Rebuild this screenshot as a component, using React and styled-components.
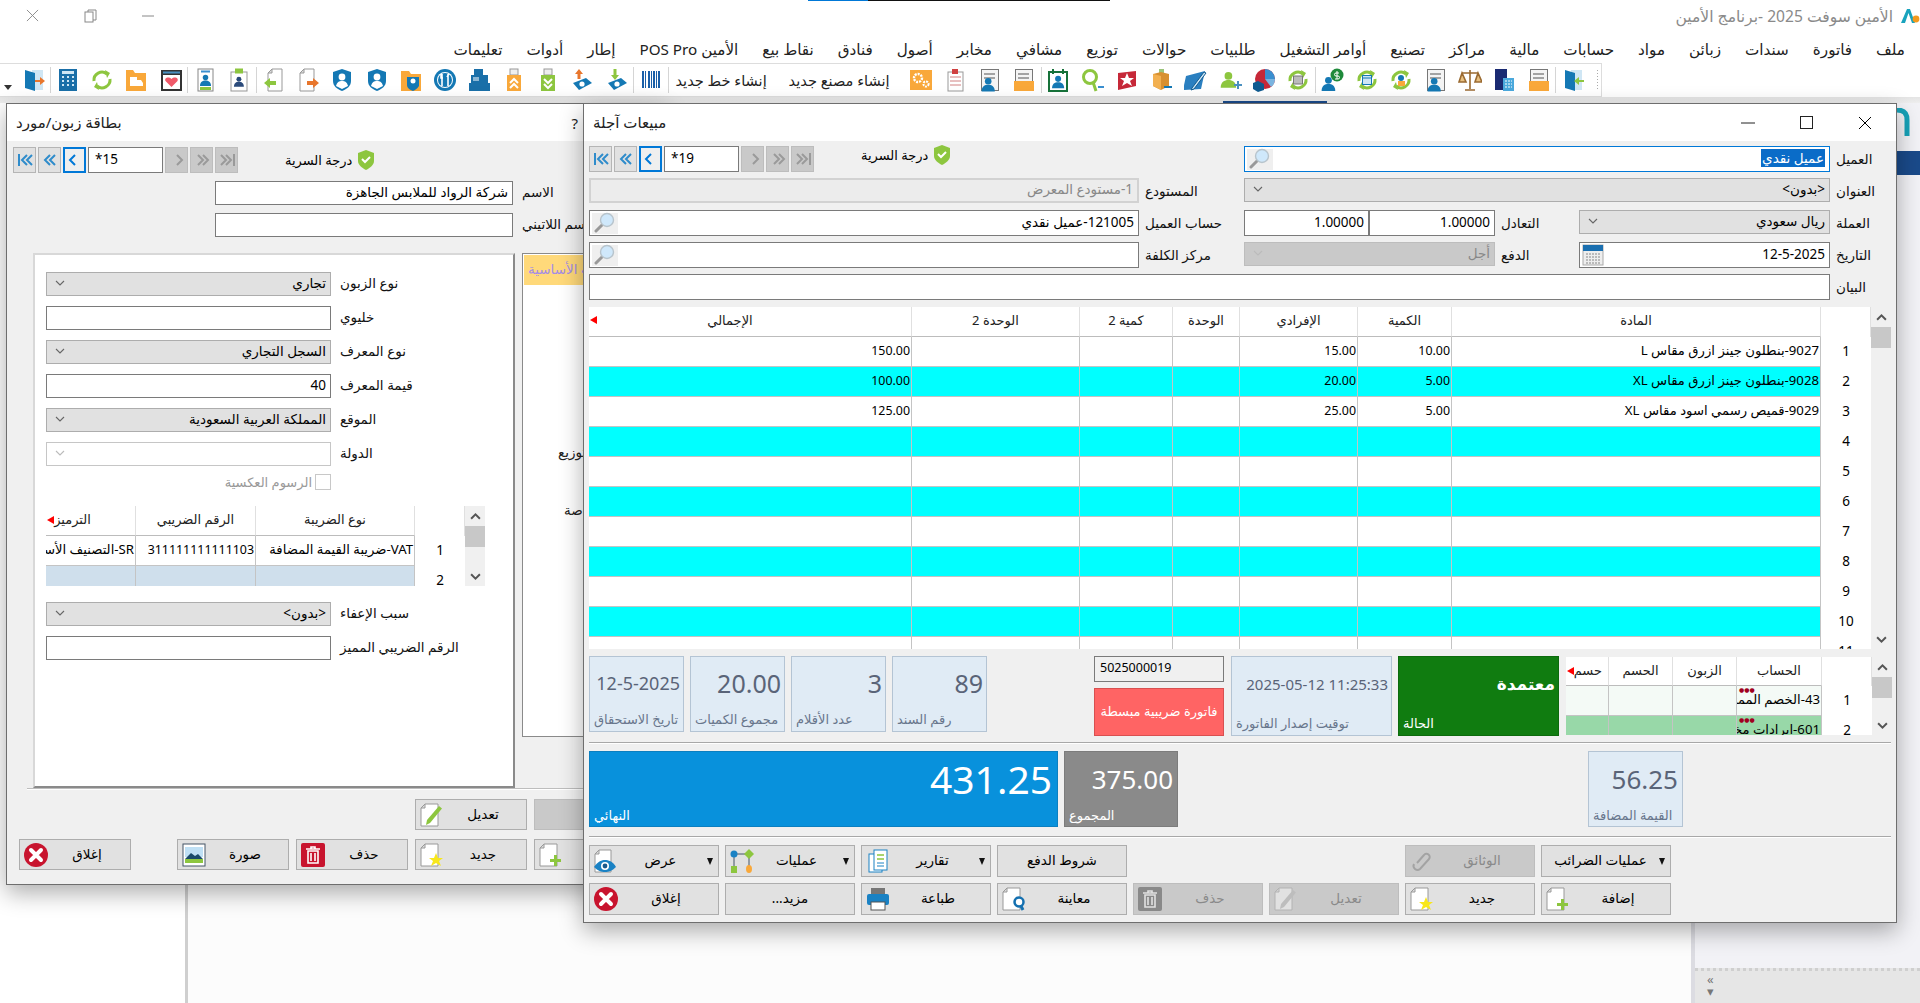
import React from 'react';
import styled, { createGlobalStyle, css } from 'styled-components';

const FONT = '"Noto Sans","DejaVu Sans",sans-serif';
const Global = createGlobalStyle`
  html,body{margin:0;padding:0;background:#fff;overflow:hidden}
  *{box-sizing:border-box}
  body{font-family:${FONT};font-size:13.5px;color:#000}
`;

const Page = styled.div`width:1920px;height:1003px;position:relative;overflow:hidden;display:flex;flex-direction:column;background:#fff;`;
const ProgressLine = styled.div`height:1px;flex:none;display:flex;padding-left:808px;`;
const ProgressSeg = styled.div`height:1px;width:${p => p.$w}px;background:${p => p.$c};`;
const TitleBar = styled.div`height:37px;flex:none;display:flex;align-items:center;justify-content:space-between;padding:0 0 8px 26px;`;
const WinControls = styled.div`display:flex;gap:45px;align-items:center;color:#888;`;
const AppTitle = styled.div`display:flex;align-items:center;gap:7px;color:#8a8a8a;font-size:15.6px;direction:ltr;`;
const AppTitleText = styled.span`direction:rtl;white-space:nowrap;`;
const MenuBar = styled.div`height:25px;flex:none;display:flex;direction:rtl;gap:24px;padding:0 15px 4px 0;align-items:center;font-size:15.2px;color:#222;white-space:nowrap;`;
const MenuItem = styled.span``;
const Toolbar = styled.div`height:34px;width:1602px;flex:none;display:flex;direction:rtl;align-items:center;padding-right:11px;border:1px solid #ddd;border-left:none;position:relative;background:#fff;`;
const Grip = styled.div`position:absolute;right:2px;top:5px;bottom:5px;width:3px;background:radial-gradient(#aaa 0.6px,transparent 0.8px) 0 0/3px 3px;`;
const ToolBtn = styled.div`width:34.3px;height:30px;flex:none;display:flex;align-items:center;justify-content:center;`;
const ToolText = styled.div`width:${p => p.$w}px;flex:none;text-align:center;font-size:14.6px;color:#222;white-space:nowrap;`;
const ToolSep = styled.div`width:1px;height:26px;flex:none;margin:0 -0.5px;background:#d5d5d5;`;
const Caret = styled.div`position:absolute;left:4px;bottom:6px;width:0;height:0;border-left:4px solid transparent;border-right:4px solid transparent;border-top:5px solid #333;`;

const Main = styled.div`flex:1;display:flex;flex-direction:column;min-height:0;`;
const Band = styled.div`height:6px;flex:none;background:linear-gradient(#e4e4e4,#eeeeee);display:flex;align-items:flex-end;padding-left:1223px;`;
const BandTab = styled.div`width:104px;height:2px;background:#1a4a8a;`;
const Columns = styled.div`flex:1;display:flex;min-height:0;`;
const SideStrip = styled.div`width:188px;flex:none;background:#fff;border-right:3px solid #cfcfcf;`;
const Client = styled.div`flex:1;background:#fcfcfc;`;
const RightPanel = styled.div`width:229px;flex:none;background:#f2f2f6;border-left:4px solid #dcdce2;display:flex;flex-direction:column;`;
const PanelLogo = styled.div`padding:5px 0 0 202px;height:48px;flex:none;`;
const PanelBar = styled.div`height:24px;margin-left:202px;background:#1a4a8a;flex:none;`;
const PanelFill = styled.div`flex:1;`;
const PanelFoot = styled.div`height:35px;flex:none;background:#e6e6e6;border-top:3px dotted #cfcfcf;padding:2px 0 0 12px;color:#777;font-size:13px;line-height:12px;`;

const Dialog = styled.div`
  position:absolute;left:${p => p.$x}px;top:103px;width:${p => p.$w}px;height:${p => p.$h}px;
  background:#f0f0f0;border:1px solid #6e6e6e;box-shadow:0 8px 22px rgba(0,0,0,.32);display:flex;flex-direction:column;
  z-index:${p => p.$z};overflow:hidden;
`;
const DlgTitle = styled.div`height:37px;flex:none;background:#fff;display:flex;align-items:center;justify-content:space-between;padding:${p => p.$pad};`;
const DlgName = styled.div`font-size:15px;direction:rtl;white-space:nowrap;color:#222;padding-bottom:2px;`;
const DlgCtl = styled.div`display:flex;gap:45px;align-items:center;`;
const HelpMark = styled.div`font-size:15px;margin-right:${p => p.$mr}px;color:#222;`;

const Nav = styled.div`display:flex;gap:2px;align-items:flex-start;`;
const NavBtn = styled.div`
  width:23px;height:26px;display:flex;align-items:center;justify-content:center;
  border:1px solid ${p => p.$off ? '#bdbdbd' : '#b5b5b5'};background:${p => p.$off ? '#c9c9c9' : '#e1e1e1'};
  color:${p => p.$off ? '#9a9a9a' : '#2f8ccb'};
  ${p => p.$focus && css`border:2px solid #0078d7;background:#efefef;color:#0078d7;`}
`;
const NavInput = styled.div`width:75px;height:26px;background:#fff;border:1px solid #7a7a7a;padding-left:6px;line-height:23px;font-size:13.5px;`;
const Secrecy = styled.div`display:flex;gap:5px;align-items:center;margin:${p => p.$mt}px 0 0 ${p => p.$ml}px;height:22px;direction:ltr;`;
const SecrecyLabel = styled.span`direction:rtl;white-space:nowrap;font-size:13px;`;

const Field = styled.div`
  height:${p => p.$h || 24}px;min-width:0;display:flex;align-items:center;justify-content:space-between;
  direction:rtl;padding:0 4px 3px 2px;background:#fff;border:1px solid #7a7a7a;white-space:nowrap;overflow:hidden;font-size:13.5px;
  ${p => p.$w && css`width:${p.$w}px;flex:none;`}
  ${p => p.$span && css`grid-column:span ${p.$span};`}
  ${p => p.$focus && css`border-color:#0078d7;`}
  ${p => p.$ro && css`background:#ececec;border:2px solid #d2d2d2;color:#888;`}
  ${p => p.$sel && css`background:#e1e1e1;border-color:#adadad;`}
  ${p => p.$dis && css`background:#c9c9c9;border-color:#bdbdbd;color:#888;`}
  ${p => p.$pale && css`border-color:#c6c6c6;`}
`;
const Selected = styled.span`background:#0a6cc8;color:#fff;padding:0 1px;line-height:18px;`;
const Lookup = styled.div`width:26px;height:100%;flex:none;background:#efefef;margin:0 -2px -3px 0;display:flex;align-items:center;justify-content:center;`;
const CalBox = styled.div`width:22px;height:22px;flex:none;margin-bottom:-3px;display:flex;`;
const Chevron = styled.div`flex:none;width:16px;padding-left:4px;color:${p => p.$pale ? '#bbb' : '#666'};display:flex;`;
const Label = styled.div`direction:rtl;text-align:left;white-space:nowrap;font-size:13.5px;color:${p => p.$c || '#111'};padding-top:2px;`;

const LeftBody = styled.div`flex:1;display:flex;flex-direction:column;padding:6px 0 0 6px;`;
const NameRow = styled.div`display:flex;gap:9px;margin:${p => p.$mt}px 0 0 202px;`;
const Split = styled.div`display:flex;margin:16px 0 0 20px;gap:7px;height:535px;flex:none;`;
const FormPanel = styled.div`width:482px;flex:none;background:#fff;border:2px solid;border-color:#d8d8d8 #8a8a8a #8a8a8a #d8d8d8;padding:17px 0 0 11px;display:flex;flex-direction:column;`;
const FormRow = styled.div`display:flex;gap:9px;height:24px;margin:${p => p.$mt || 0}px 0 ${p => p.$mb ?? 10}px;`;
const CheckRow = styled.div`display:flex;justify-content:flex-end;align-items:center;gap:3px;width:285px;height:16px;margin:-2px 0 16px;color:#999;font-size:13px;direction:ltr;`;
const CheckText = styled.span`direction:rtl;white-space:nowrap;`;
const CheckBox = styled.div`width:16px;height:16px;background:#fff;border:1px solid #c8c8c8;`;
const TabList = styled.div`width:160px;flex:none;height:484px;background:#fff;border:1px solid #8a8a8a;padding:1px 1px 0;display:flex;flex-direction:column;`;
const TabItem = styled.div`height:30px;flex:none;line-height:28px;direction:rtl;text-align:left;white-space:nowrap;font-size:13.5px;padding-left:${p => p.$pl}px;margin-top:${p => p.$mt || 0}px;background:${p => p.$on ? '#ffd97a' : 'transparent'};color:${p => p.$on ? '#a48ce6' : '#222'};`;
const DlgRule = styled.div`height:2px;margin-left:14px;background:#bdbdbd;border-bottom:1px solid #fff;flex:none;`;
const LeftButtons = styled.div`display:grid;grid-template-columns:112px 32px 112px 112px 112px 112px;column-gap:7px;row-gap:9px;grid-auto-rows:31px;padding:9px 0 0 12px;margin-left:-6px;`;

const Btn = styled.div`
  position:relative;display:flex;align-items:center;padding:0 ${p => p.$menu ? 3 : 4}px 0 4px;min-width:0;
  background:${p => p.$off ? '#c9c9c9' : '#e1e1e1'};border:1px solid ${p => p.$off ? '#bdbdbd' : '#adadad'};color:${p => p.$off ? '#8a8a8a' : '#000'};
  ${p => p.$col && css`grid-column:${p.$col};`}
`;
const BtnIcon = styled.div`width:24px;height:26px;flex:none;display:flex;align-items:center;justify-content:center;${p => p.$off && css`filter:grayscale(1);opacity:.45;`}`;
const BtnText = styled.div`flex:1;text-align:center;direction:rtl;white-space:nowrap;font-size:13.5px;padding-bottom:2px;`;
const BtnCaret = styled.div`flex:none;width:0;height:0;margin:0 2px 0 4px;border-left:3.5px solid transparent;border-right:3.5px solid transparent;border-top:7px solid #111;`;

const RightBody = styled.div`flex:1;display:flex;flex-direction:column;padding:5px 5px 0 5px;`;
const HeadGrid = styled.div`display:grid;grid-template-columns:550px 105px 125px 126px 84px 251px 62px;grid-auto-rows:26px;row-gap:6px;align-items:start;`;
const NavCell = styled.div`display:flex;`;
const SpanLabel = styled(Label)`padding-left:6px;padding-top:4px;`;

const GridBox = styled.div`display:flex;height:${p => p.$h}px;margin:${p => p.$mt || 0}px 0 0 ${p => p.$ml || 0}px;width:${p => p.$w}px;flex:none;overflow:hidden;`;
const GridBody = styled.div`flex:1;min-width:0;overflow:hidden;background:#fff;`;
const GridRow = styled.div`display:grid;grid-template-columns:${p => p.$cols};height:${p => p.$rh}px;`;
const HCell = styled.div`
  position:relative;display:flex;align-items:center;justify-content:${p => p.$end ? 'flex-end' : 'center'};direction:ltr;font-size:13px;white-space:nowrap;overflow:hidden;padding:0 ${p => p.$pr || 0}px 3px 0;
  border-right:1px solid #e0e0e0;border-bottom:${p => p.$num ? 'none' : '1px solid #bcbcbc'};color:#222;
  ${p => p.$flag && css`&::before{content:'';position:absolute;left:1px;top:${p.$ft || 9}px;border-top:4px solid transparent;border-bottom:4px solid transparent;border-right:7px solid #f00;}`}
`;
const HText = styled.span`direction:rtl;`;
const Cell = styled.div`
  position:relative;display:flex;align-items:center;justify-content:flex-start;direction:rtl;padding:0 1px 3px 0;white-space:nowrap;overflow:hidden;font-size:${p => p.$digits ? 12.4 : 13.2}px;
  background:${p => p.$bg};border-right:1px solid #c4c4c4;border-bottom:1px solid #c4c4c4;
`;
const NumCell = styled.div`display:flex;align-items:center;justify-content:center;background:#fff;font-size:13.5px;padding-bottom:2px;`;
const Dots = styled.span`position:absolute;left:2px;top:1px;color:#a00020;font-size:6px;line-height:7px;direction:ltr;`;
const ScrollBar = styled.div`width:20px;flex:none;background:#f0f0f0;display:flex;flex-direction:column;align-items:stretch;`;
const ScrollArrow = styled.div`height:20px;flex:none;display:flex;align-items:center;justify-content:center;color:#555;`;
const ScrollThumb = styled.div`height:21px;flex:none;background:#c8c8c8;margin-bottom:auto;`;

const InfoBand = styled.div`display:flex;height:80px;margin-top:7px;flex:none;`;
const Tile = styled.div`
  width:${p => p.$w}px;height:${p => p.$h}px;flex:none;margin-left:${p => p.$ml || 0}px;display:flex;flex-direction:column;justify-content:space-between;
  padding:${p => p.$pad || '2px 3px 3px 4px'};overflow:hidden;white-space:nowrap;
  background:${p => p.$bg || '#e0ebf5'};border:1px solid ${p => p.$bd || '#b4c4d4'};color:${p => p.$fg || '#5a6478'};
`;
const TileValue = styled.div`text-align:right;font-size:${p => p.$fs}px;line-height:${p => p.$lh || 48}px;direction:${p => p.$rtl ? 'rtl' : 'ltr'};font-weight:${p => p.$bold ? 700 : 400};`;
const TileLabel = styled.div`direction:rtl;text-align:left;font-size:13px;line-height:18px;color:${p => p.$c || '#68768c'};`;
const SerialCol = styled.div`width:130px;flex:none;margin-left:107px;display:flex;flex-direction:column;gap:6px;`;
const SerialBox = styled.div`height:26px;flex:none;background:#f0f0f0;border:1px solid #7a7a7a;padding-left:5px;line-height:22px;font-size:12.5px;`;
const RedBadge = styled.div`height:48px;flex:none;background:#ff6464;border:1px solid #d85050;color:#fff;display:flex;align-items:center;justify-content:center;direction:rtl;font-size:13px;white-space:nowrap;padding-bottom:3px;`;
const Rule = styled.div`height:2px;flex:none;background:#a8a8a8;border-bottom:1px solid #fff;margin-top:${p => p.$mt}px;width:1302px;`;
const TotalsRow = styled.div`display:flex;height:76px;margin-top:7px;flex:none;`;
const RightButtons = styled.div`display:grid;grid-template-columns:repeat(8,130px);column-gap:6px;row-gap:6px;grid-auto-rows:32px;margin-top:7px;`;

/* ---- drawings ---- */
const Ico = ({ s = 24, children, vb = 24 }) => <svg width={s} height={s} viewBox={`0 0 ${vb} ${vb}`}>{children}</svg>;
const B = '#1478b4', G = '#8dc63f', O = '#f9a83a';
const Person = ({ x = 0, y = 0, s = 1, c = B }) => <g transform={`translate(${x} ${y}) scale(${s})`} fill={c}><circle cx="12" cy="7" r="5.5" /><path d="M1 24c0-8 5-11 11-11s11 3 11 11z" /></g>;
const Page1 = ({ x = 3, w = 15 }) => <g><path d={`M${x + 4} 1h${w - 4}v22h-${w}V5z`} fill="#fff" stroke="#999" /><path d={`M${x + 4} 1v4h-4z`} fill="#ddd" stroke="#999" /></g>;
const Lines = () => <g stroke="#888" strokeWidth="1.4"><path d="M6 6h11M6 10h11" /></g>;
const Sheet = () => <rect x="3.5" y="1.5" width="17" height="21" fill="#f4f4f4" stroke="#777" />;
const FolderBot = () => <rect x="2" y="13" width="20" height="10" fill={O} />;
const Cycle = () => <g fill="none" stroke={G} strokeWidth="3"><path d="M4 13a8 8 0 0 1 13-7" /><path d="M20 11a8 8 0 0 1-13 7" /><path d="M15 2l5 3-3 5z" fill={G} stroke="none" /><path d="M9 22l-5-3 3-5z" fill={G} stroke="none" /></g>;
const Usb = ({ c, up }) => <g><rect x="8" y="1" width="8" height="6" fill="#eee" stroke="#999" /><rect x="5" y="7" width="14" height="16" fill={c} /><path d={up ? 'M8 15l4-4 4 4M8 20l4-4 4 4' : 'M8 11l4 4 4-4M8 16l4 4 4-4'} fill="none" stroke="#fff" strokeWidth="2" /></g>;
const Disk = ({ c, up }) => <g><path d="M3 15l13-5 6 5-13 7z" fill={B} /><circle cx="12" cy="16" r="2.6" fill="#fff" /><path d={up ? 'M9 1l4 5h-2.5v5h-3V6H5z' : 'M10 12l-4-5h2.5V1h3v6H14z'} fill={c} /></g>;
const ShieldP = () => <g><path d="M12 1l9 3v9c0 5-4 8-9 10-5-2-9-5-9-10V4z" fill={B} /><circle cx="12" cy="9" r="3.4" fill="#fff" /><path d="M6 18c1-4 3-5 6-5s5 1 6 5l-6 3z" fill="#fff" /></g>;

const tools = {
  doorIn: <g><rect x="10" y="2" width="11" height="20" fill="#cfe6f4" /><path d="M4 2l10 3v18L4 20z" fill={B} /><path d="M23 12h-5V9l-5 4 5 4v-3h5z" fill={G} /></g>,
  docFolder: <g><Sheet /><Lines /><path d="M6 14h11" stroke="#888" strokeWidth="1.4" /><FolderBot /></g>,
  bookCalc: <g><rect x="3" y="1" width="12" height="21" fill="#1a2a72" /><rect x="11" y="10" width="11" height="13" fill="#4aa8dc" /><path d="M13 13h7M13 16h7M13 19h7" stroke="#fff" strokeDasharray="2 1" /></g>,
  scale: <g fill="none" stroke="#9a6a30" strokeWidth="1.6"><path d="M12 2v19M4 5h16M7 22h10" /><path d="M4 5l-3 9h7zM20 5l-3 9h7z" fill="#e8c080" /></g>,
  personDoc: <g><Sheet /><Lines /><Person x={3} y={9} s={.6} /></g>,
  cyclePerson: <g><Cycle /><circle cx="12" cy="10" r="3" fill={B} /><rect x="9" y="13" width="7" height="5" fill={O} /></g>,
  cycleCal: <g><Cycle /><rect x="7.5" y="7.5" width="9" height="9" fill="#cfe6f4" stroke={B} /><path d="M7.5 10h9" stroke={B} /></g>,
  personMoney: <g><Person x={0} y={8} s={.62} /><circle cx="16" cy="7" r="6.5" fill="#1f8a3b" /><path d="M16 3v8M18 5h-3a1 1 0 0 0 0 3h2a1 1 0 0 1 0 3h-3" stroke="#fff" fill="none" /></g>,
  cyclePrint: <g><Cycle /><rect x="7.5" y="8" width="9" height="8" fill="#bbb" stroke="#777" /></g>,
  pie: <g><circle cx="13" cy="11" r="10" fill="#c62838" /><path d="M13 1a10 10 0 0 1 10 10H13z" fill="#3a8fd0" /><path d="M13 11h10a10 10 0 0 1-4 8z" fill="#7ab4e0" /><path d="M6 13l6 3v6l-6 2-5-3v-6z" fill="#0f5a90" /></g>,
  personAdd: <g><Person x={2} y={3} s={.7} c={G} /><path d="M16 16h3v-3h2v3h3v2h-3v3h-2v-3h-3z" fill="#4a90c0" /></g>,
  pen: <g><path d="M2 8l19-5-4 18-18 1z" fill="#2a7fc0" /><path d="M8 20l12-16 2 1-12 16-3 1z" fill="#cfe6f4" stroke="#0f5a90" /></g>,
  box: <g><rect x="10" y="1" width="5" height="5" fill="#9ac47a" /><path d="M4 6l8-2 8 2v12l-8 4-8-4z" fill="#d89030" /><path d="M12 8v14l-8-4V6z" fill="#f2b050" /><path d="M15 19h8" stroke={B} strokeWidth="2" /></g>,
  star: <g><path d="M3 5l18-2v15l-18 4z" fill="#c62838" /><path d="M12 5l2 5h5l-4 3 2 5-5-3-5 3 2-5-4-3h5z" fill="#fff" /></g>,
  lens: <g><circle cx="9" cy="9" r="6.5" fill="none" stroke={G} strokeWidth="3" /><path d="M12 14l3 9" stroke={G} strokeWidth="3" /><path d="M17 19h6" stroke="#3a8fd0" strokeWidth="2" /></g>,
  calPerson: <g><rect x="3" y="4" width="18" height="19" fill="#fff" stroke="#17723a" strokeWidth="2" /><path d="M7 1v5M17 1v5" stroke="#17723a" strokeWidth="2" /><Person x={5.5} y={7} s={.55} /></g>,
  clip: <g><rect x="4" y="4" width="15" height="19" fill="#fff" stroke="#999" /><path d="M6 9h11M6 13h11M6 17h11" stroke="#d08080" /><path d="M8 1h6v5H8z" fill="#d04040" /></g>,
  gears: <g><rect x="1" y="2" width="22" height="20" fill={O} /><circle cx="9" cy="10" r="4" fill="none" stroke="#fff" strokeWidth="2.4" strokeDasharray="2 1" /><circle cx="17" cy="16" r="2.6" fill="none" stroke="#fff" strokeWidth="2" strokeDasharray="2 1" /></g>,
  barcode: <g fill="#1a5fa8"><path d="M3 3h2v17H3zM6 3h1v17H6zM9 3h2v17H9zM12 3h1v17h-1zM14 3h2v17h-2zM17 3h1v17h-1zM19 3h2v17h-2z" /></g>,
  diskG: <Disk c={G} />,
  diskO: <Disk c="#e8762c" up />,
  usbG: <Usb c={G} />,
  usbO: <Usb c={O} up />,
  register: <g fill="#1a6fa8"><rect x="7" y="1" width="9" height="6" /><rect x="4" y="7" width="17" height="8" /><rect x="2" y="15" width="21" height="8" /><path d="M6 10h6M6 12h6" stroke="#fff" /></g>,
  fork: <g><circle cx="12" cy="12" r="11" fill={B} /><circle cx="12" cy="12" r="8" fill="#fff" /><circle cx="12" cy="12" r="7" fill={B} /><path d="M9 6v12M15 6v12M8 6v4h2M14 9l2-3" stroke="#fff" strokeWidth="1.6" fill="none" /></g>,
  folderP: <g><path d="M2 3h8l2 3h10v17H2z" fill={O} /><path d="M8 9h12v9c-2 3-4 4-6 5-3-1-6-3-6-6z" fill={B} /><circle cx="14" cy="13" r="2.5" fill="#fff" /></g>,
  shield: <ShieldP />,
  docOut: <g><Page1 x={4} w={14} /><path d="M11 13h6v-3l6 5-6 5v-3h-6z" fill="#e8762c" /></g>,
  docIn: <g><Page1 x={6} w={14} /><path d="M14 13H8v-3l-6 5 6 5v-3h6z" fill={G} /></g>,
  clipP: <g><rect x="4" y="4" width="16" height="19" fill="#fff" stroke="#999" /><rect x="8" y="0.5" width="8" height="5" fill={G} /><Person x={6.5} y={8} s={.45} c="#2a4a7a" /></g>,
  badge: <g><rect x="5" y="1" width="15" height="22" fill="#fff" stroke="#888" /><rect x="8" y="2.5" width="9" height="2" fill="#3a8fd0" /><Person x={6.5} y={6} s={.5} /><rect x="7" y="19" width="11" height="3" fill={G} /></g>,
  heart: <g><rect x="2" y="2" width="21" height="21" fill="#333" /><rect x="4" y="7" width="17" height="14" fill="#fff" /><rect x="4" y="3.5" width="17" height="2" fill="#4a90c0" /><path d="M12.5 19l-6-6c-1.5-3 3-5 6-2 3-3 7.500-1 6 2z" fill="#f05a6a" /></g>,
  truck: <g><path d="M2 2h7l2 3h11v18H2z" fill={O} /><path d="M6 9h7v9H6zM13 12h4l2 3v3h-6z" fill="#fff" /></g>,
  cycle: <Cycle />,
  calc: <g><rect x="3" y="1" width="18" height="22" fill="#1a6fa8" /><rect x="6" y="3" width="12" height="3" fill="#cfe6f4" /><path d="M6 9h12M6 13h12M6 17h12" stroke="#cfe6f4" strokeWidth="2" strokeDasharray="2 3" /></g>,
  doorOut: <g><rect x="10" y="2" width="11" height="20" fill="#cfe6f4" /><path d="M3 2l10 3v18L3 20z" fill={B} /><path d="M13 12h5V9l5 4-5 4v-3h-5z" fill="#e8762c" /></g>,
};

const toolOrder = ['doorIn', '|', 'docFolder', 'bookCalc', 'scale', 'personDoc', 'cyclePerson', 'cycleCal', 'personMoney', '|', 'cyclePrint', 'pie', 'personAdd', 'pen', 'box', 'star', 'lens', 'calPerson', '|', 'docFolder', 'personDoc', 'clip', 'gears',
  't:إنشاء مصنع جديد:130', 't:إنشاء خط جديد:106', '|', 'barcode', '|', 'diskG', 'diskO', 'usbG', 'usbO', 'register', 'fork', 'folderP', 'shield', 'shield', 'docOut', 'docIn', '|', 'clipP', 'badge', '|', 'heart', 'truck', 'cycle', 'calc', '|', 'doorOut'];

const X = ({ s = 14, w = 1 }) => <svg width={s} height={s} viewBox="0 0 14 14"><path d="M1 1l12 12M13 1L1 13" stroke="currentColor" strokeWidth={w} /></svg>;
const Chev = ({ d = 'down', s = 10, w = 1.1 }) => {
  const p = { down: 'M1 3l4 4 4-4', up: 'M1 7l4-4 4 4' }[d];
  return <svg width={s} height={s} viewBox="0 0 10 10"><path d={p} fill="none" stroke="currentColor" strokeWidth={w} /></svg>;
};
const NavGlyph = ({ kind }) => {
  const l1 = 'M9 3L4 8l5 5', l2 = 'M14 3L9 8l5 5';
  const g = {
    first: <><path d={l1} transform="translate(1 0)" /><path d={l2} transform="translate(1 0)" /><path d="M2 2v12" /></>,
    prev2: <><path d={l1} transform="translate(-1 0)" /><path d={l2} transform="translate(-1 0)" /></>,
    prev: <path d={l1} transform="translate(-1 0)" />,
    next: <path d={l1} transform="matrix(-1 0 0 1 17 0)" />,
    next2: <><path d={l1} transform="matrix(-1 0 0 1 18 0)" /><path d={l2} transform="matrix(-1 0 0 1 18 0)" /></>,
    last: <><path d={l1} transform="matrix(-1 0 0 1 16 0)" /><path d={l2} transform="matrix(-1 0 0 1 16 0)" /><path d="M15 2v12" /></>,
  }[kind];
  return <svg width="16" height="16" viewBox="0 0 16 16" fill="none" stroke="currentColor" strokeWidth="2">{g}</svg>;
};
const Shield = () => <svg width="18" height="20" viewBox="0 0 18 20"><path d="M9 0l8 3v8c0 4-4 7-8 9-4-2-8-5-8-9V3z" fill="#8dc63f" /><path d="M5 9l3 3 5-5" fill="none" stroke="#fff" strokeWidth="2" /></svg>;
const Lens = () => <svg width="22" height="22" viewBox="0 0 22 22"><path d="M8 13l-6 6" stroke="#999" strokeWidth="3" strokeLinecap="round" /><circle cx="13" cy="8" r="6.5" fill="#cfe8fb" stroke="#b8c4cc" strokeWidth="1.4" /></svg>;
const Calendar = () => <svg width="22" height="22" viewBox="0 0 22 22"><rect x="1" y="1" width="20" height="20" fill="#eee" stroke="#aaa" /><rect x="1" y="1" width="20" height="6" fill="#1a6fb0" /><path d="M4 10h14M4 13h14M4 16h14M4 19h14" stroke="#aaa" strokeWidth="1.6" strokeDasharray="2 1" /></svg>;
const Logo = () => <svg width="20" height="16" viewBox="0 0 20 16"><path d="M1 15L7 1h3l5 14h-3L8.500 5 5 15z" fill="#19a3bd" /><circle cx="16" cy="11" r="3.400" fill="#f39a1e" /></svg>;
const TealArc = () => <svg width="14" height="30" viewBox="0 0 14 30"><path d="M0 2c7 0 10 3 10 10v16" fill="none" stroke="#17a2b8" strokeWidth="5" /></svg>;

const btnIcons = {
  add: <Ico><Page1 x={1} w={17} /><path d="M11 16h4v-4h3v4h4v3h-4v4h-3v-4h-4z" fill={G} /></Ico>,
  fresh: <Ico><Page1 x={1} w={17} /><path d="M16 10l2 5h5l-4 3 2 5-5-3-5 3 2-5-4-3h5z" fill="#f8e71c" /></Ico>,
  edit: <Ico><Page1 x={1} w={17} /><path d="M6 22l1-5L19 3l3 2.500L10 20z" fill={G} /></Ico>,
  trash: <Ico><rect width="24" height="24" rx="2" fill="#c8142e" /><path d="M7 8h10v12H7zM5 6h14M10 6V4h4v2M10 10v8M14 10v8" fill="none" stroke="#fff" strokeWidth="1.6" /></Ico>,
  photo: <Ico><rect x="1" y="1" width="22" height="22" fill="#fff" stroke="#456" /><rect x="3" y="4" width="18" height="10" fill="#bfe0f5" /><path d="M3 16l6-6 4 3 3-2 5 5z" fill="#1a4a6a" /><rect x="3" y="16" width="18" height="4" fill="#8dc63f" /></Ico>,
  close: <Ico><circle cx="12" cy="12" r="12" fill="#c8142e" /><path d="M7 7l10 10M17 7L7 17" stroke="#fff" strokeWidth="4" strokeLinecap="round" /></Ico>,
  print: <Ico><rect x="5" y="1" width="14" height="6" fill="#777" /><rect x="1" y="7" width="22" height="11" rx="2" fill="#1a82c4" /><rect x="5" y="15" width="14" height="8" fill="#fff" stroke="#555" /></Ico>,
  preview: <Ico><Page1 x={1} w={17} /><circle cx="17" cy="15" r="4.500" fill="#fff" stroke="#1470b0" strokeWidth="2.500" /><path d="M19 19l2 4" stroke="#1470b0" strokeWidth="3" /></Ico>,
  view: <Ico><Page1 x={1} w={16} /><path d="M0 18c4-6 8-7 11-7s8 1 11 7c-4 4-7 5-11 5s-7-1-11-5z" fill="#1a82c4" /><circle cx="11" cy="17" r="4" fill="#fff" /><circle cx="11" cy="17" r="2.400" fill="#1a5a8c" /></Ico>,
  ops: <Ico><path d="M4 5h15M4 5v14M19 5v14" stroke="#456" fill="none" /><circle cx="4" cy="5" r="3.500" fill="#1a82c4" /><path d="M19 0l5 5-5 5-5-5z" fill={G} /><rect x="1" y="17" width="6" height="7" fill={G} /><ellipse cx="19" cy="20" rx="3" ry="4" fill={O} /></Ico>,
  report: <Ico><rect x="3" y="5" width="13" height="18" fill="#fff" stroke="#1a82c4" /><rect x="8" y="1" width="13" height="20" fill="#fff" stroke="#1a82c4" /><path d="M11 6h7M11 10h7" stroke={G} strokeWidth="1.500" /><path d="M11 14h7M11 17h7" stroke="#1a82c4" /></Ico>,
  attach: <Ico><path d="M7 14l7-8a3 3 0 0 1 5 4l-9 10a4 4 0 0 1-6-5" fill="none" stroke="#777" strokeWidth="2" /></Ico>,
};

const Button = ({ icon, text, menu, off, col }) => (
  <Btn $menu={menu} $off={off} $col={col}>
    {icon && <BtnIcon $off={off}>{btnIcons[icon]}</BtnIcon>}
    <BtnText>{text}</BtnText>
    {menu && <BtnCaret />}
  </Btn>
);

const NavBar = ({ value }) => (
  <Nav>
    <NavBtn><NavGlyph kind="first" /></NavBtn>
    <NavBtn><NavGlyph kind="prev2" /></NavBtn>
    <NavBtn $focus><NavGlyph kind="prev" /></NavBtn>
    <NavInput>{value}</NavInput>
    <NavBtn $off><NavGlyph kind="next" /></NavBtn>
    <NavBtn $off><NavGlyph kind="next2" /></NavBtn>
    <NavBtn $off><NavGlyph kind="last" /></NavBtn>
  </Nav>
);

const SelectBox = ({ text, pale, dis, span, h, w }) => (
  <Field $sel={!pale && !dis} $dis={dis} $pale={pale} $span={span} $h={h} $w={w}>
    <span>{text}</span>
    <Chevron $pale={pale || dis}><Chev /></Chevron>
  </Field>
);
const LookupBox = ({ text, focus, span, selected }) => (
  <Field $h={26} $focus={focus} $span={span}>
    {selected ? <Selected>{text}</Selected> : <span>{text}</span>}
    <Lookup><Lens /></Lookup>
  </Field>
);
const Scroll = () => (
  <ScrollBar>
    <ScrollArrow><Chev d="up" s={11} w={1.8} /></ScrollArrow>
    <ScrollThumb />
    <ScrollArrow><Chev d="down" s={11} w={1.8} /></ScrollArrow>
  </ScrollBar>
);
const Head = ({ children, ...rest }) => <HCell {...rest}><HText>{children}</HText></HCell>;

const mainCols = '323px 168px 93px 67px 118px 94px 369px 50px';
const mainHead = ['الإجمالي', 'الوحدة 2', 'كمية 2', 'الوحدة', 'الإفرادي', 'الكمية', 'المادة'];
const mainRows = [
  ['150.00', '', '', '', '15.00', '10.00', '9027-بنطلون جينز ازرق مقاس L'],
  ['100.00', '', '', '', '20.00', '5.00', '9028-بنطلون جينز ازرق مقاس XL'],
  ['125.00', '', '', '', '25.00', '5.00', '9029-قميص رسمي اسود مقاس XL'],
  ...Array.from({ length: 8 }, () => ['', '', '', '', '', '', '']),
];
const menu = ['ملف', 'فاتورة', 'سندات', 'زبائن', 'مواد', 'حسابات', 'مالية', 'مراكز', 'تصنيع', 'أوامر التشغيل', 'طلبيات', 'حوالات', 'توزيع', 'مشافي', 'مخابر', 'أصول', 'فنادق', 'نقاط بيع', 'الأمين POS Pro', 'إطار', 'أدوات', 'تعليمات'];
const FW = 285;
const taxCols = '90px 120px 159px 50px';
const acctCols = '43px 64px 64px 85px 50px';

export default function App() {
  return (
    <Page>
      <Global />
      <ProgressLine><ProgressSeg $w={60} $c="#0078d7" /><ProgressSeg $w={242} $c="#111" /></ProgressLine>
      <TitleBar>
        <WinControls>
          <X s={13} />
          <svg width="13" height="14" viewBox="0 0 13 14" fill="none" stroke="#888"><rect x="1" y="3" width="8" height="10" /><path d="M4 3V1h8v10H9" /></svg>
          <svg width="12" height="2"><path d="M0 1h12" stroke="#888" /></svg>
        </WinControls>
        <AppTitle><AppTitleText>الأمين سوفت 2025 -برنامج الأمين</AppTitleText><Logo /></AppTitle>
      </TitleBar>
      <MenuBar>{menu.map(m => <MenuItem key={m}>{m}</MenuItem>)}</MenuBar>
      <Toolbar>
        <Grip />
        {toolOrder.map((t, i) => {
          if (t === '|') return <ToolSep key={i} />;
          if (t.startsWith('t:')) { const [, a, w] = t.split(':'); return <ToolText key={i} $w={+w}>{a}</ToolText>; }
          return <ToolBtn key={i}><Ico>{tools[t]}</Ico></ToolBtn>;
        })}
        <Caret />
      </Toolbar>
      <Main>
        <Band><BandTab /></Band>
        <Columns>
          <SideStrip />
          <Client />
          <RightPanel>
            <PanelLogo><TealArc /></PanelLogo>
            <PanelBar />
            <PanelFill />
            <PanelFoot>«<br />▾</PanelFoot>
          </RightPanel>
        </Columns>
      </Main>

      {/* customer card */}
      <Dialog $x={6} $w={660} $h={782} $z={1}>
        <DlgTitle $pad="0 0 0 9px">
          <DlgName>بطاقة زبون/مورد</DlgName>
          <HelpMark $mr={87}>?</HelpMark>
        </DlgTitle>
        <LeftBody>
          <NavCell>
            <NavBar value="*15" />
            <Secrecy $ml={47} $mt={2}><SecrecyLabel>درجة السرية</SecrecyLabel><Shield /></Secrecy>
          </NavCell>
          <NameRow $mt={8}><Field $w={298}><span>شركة الرواد للملابس الجاهزة</span></Field><Label>الاسم</Label></NameRow>
          <NameRow $mt={8}><Field $w={298} /><Label>الاسم اللاتيني</Label></NameRow>
          <Split>
            <FormPanel>
              <FormRow><SelectBox w={FW} text="تجاري" /><Label>نوع الزبون</Label></FormRow>
              <FormRow><Field $w={FW} /><Label>خليوي</Label></FormRow>
              <FormRow><SelectBox w={FW} text="السجل التجاري" /><Label>نوع المعرف</Label></FormRow>
              <FormRow><Field $w={FW}><span>40</span></Field><Label>قيمة المعرف</Label></FormRow>
              <FormRow><SelectBox w={FW} text="المملكة العربية السعودية" /><Label>الموقع</Label></FormRow>
              <FormRow><SelectBox w={FW} text="" pale /><Label>الدولة</Label></FormRow>
              <CheckRow><CheckText>الرسوم العكسية</CheckText><CheckBox /></CheckRow>
              <GridBox $h={80} $w={439}>
                <GridBody>
                  <GridRow $cols={taxCols} $rh={30}>
                    <Head $flag $ft={10} $pr={36}>الترميز</Head><Head>الرقم الضريبي</Head><Head>نوع الضريبة</Head><HCell $num />
                  </GridRow>
                  <GridRow $cols={taxCols} $rh={30}>
                    <Cell>SR-التصنيف الأساسي</Cell><Cell $digits>311111111111103</Cell><Cell>VAT-ضريبة القيمة المضافة</Cell><NumCell>1</NumCell>
                  </GridRow>
                  <GridRow $cols={taxCols} $rh={30}>
                    <Cell $bg="#cfdfec" /><Cell $bg="#cfdfec" /><Cell $bg="#cfdfec" /><NumCell>2</NumCell>
                  </GridRow>
                </GridBody>
                <Scroll />
              </GridBox>
              <FormRow $mt={16}><SelectBox w={FW} text="<بدون>" /><Label>سبب الإعفاء</Label></FormRow>
              <FormRow><Field $w={FW} /><Label>الرقم الضريبي المميز</Label></FormRow>
            </FormPanel>
            <TabList>
              <TabItem $on $pl={4}>البيانات الأساسية</TabItem>
              <TabItem $mt={153} $pl={34}>شروط التوزيع</TabItem>
              <TabItem $mt={28} $pl={40}>معلومات خاصة</TabItem>
            </TabList>
          </Split>
          <DlgRule />
          <LeftButtons>
            <Button icon="edit" text="تعديل" col="5" />
            <Button off col="6" text="" />
            <Button icon="close" text="إغلاق" col="1" />
            <Button icon="photo" text="صورة" col="3" />
            <Button icon="trash" text="حذف" col="4" />
            <Button icon="fresh" text="جديد" col="5" />
            <Button icon="add" text="إضافة" col="6" />
          </LeftButtons>
        </LeftBody>
      </Dialog>

      {/* invoice */}
      <Dialog $x={583} $w={1314} $h={820} $z={2}>
        <DlgTitle $pad="0 24px 0 9px">
          <DlgName>مبيعات آجلة</DlgName>
          <DlgCtl>
            <svg width="14" height="14"><path d="M0 7h14" stroke="#222" /></svg>
            <svg width="13" height="13"><rect x=".5" y=".5" width="12" height="12" fill="none" stroke="#222" /></svg>
            <X s={14} />
          </DlgCtl>
        </DlgTitle>
        <RightBody>
          <HeadGrid>
            <NavCell>
              <NavBar value="*19" />
              <Secrecy $ml={47} $mt={-2}><SecrecyLabel>درجة السرية</SecrecyLabel><Shield /></Secrecy>
            </NavCell>
            <span />
            <LookupBox text="عميل نقدي" focus span={4} selected />
            <SpanLabel>العميل</SpanLabel>

            <Field $ro $h={25}><span>1-مستودع المعرض</span></Field>
            <SpanLabel>المستودع</SpanLabel>
            <SelectBox text="<بدون>" span={4} />
            <SpanLabel>العنوان</SpanLabel>

            <LookupBox text="121005-عميل نقدي" />
            <SpanLabel>حساب العميل</SpanLabel>
            <Field $h={26}><span>1.00000</span></Field>
            <Field $h={26}><span>1.00000</span></Field>
            <SpanLabel>التعادل</SpanLabel>
            <SelectBox text="ريال سعودي" />
            <SpanLabel>العملة</SpanLabel>

            <LookupBox text="" />
            <SpanLabel>مركز الكلفة</SpanLabel>
            <SelectBox text="أجل" dis span={2} />
            <SpanLabel>الدفع</SpanLabel>
            <Field $h={26}><span>12-5-2025</span><CalBox><Calendar /></CalBox></Field>
            <SpanLabel>التاريخ</SpanLabel>

            <Field $h={26} $span={6} />
            <SpanLabel>البيان</SpanLabel>
          </HeadGrid>

          <GridBox $h={342} $mt={7} $w={1302}>
            <GridBody>
              <GridRow $cols={mainCols} $rh={30}>
                {mainHead.map((h, i) => <Head key={h} $flag={i === 0} $ft={9} $pr={i === 0 ? 40 : 0}>{h}</Head>)}
                <HCell $num />
              </GridRow>
              {mainRows.map((r, i) => (
                <GridRow key={i} $cols={mainCols} $rh={30}>
                  {r.map((c, j) => <Cell key={j} $digits={j < 6} $bg={i % 2 ? '#00ffff' : '#fff'}>{c}</Cell>)}
                  <NumCell>{i + 1}</NumCell>
                </GridRow>
              ))}
            </GridBody>
            <Scroll />
          </GridBox>

          <InfoBand>
            <Tile $w={95} $h={76}><TileValue $fs={18}>12-5-2025</TileValue><TileLabel>تاريخ الاستحقاق</TileLabel></Tile>
            <Tile $w={95} $h={76} $ml={6}><TileValue $fs={25}>20.00</TileValue><TileLabel>مجموع الكميات</TileLabel></Tile>
            <Tile $w={95} $h={76} $ml={6}><TileValue $fs={25}>3</TileValue><TileLabel>عدد الأقلام</TileLabel></Tile>
            <Tile $w={95} $h={76} $ml={6}><TileValue $fs={25}>89</TileValue><TileLabel>رقم السند</TileLabel></Tile>
            <SerialCol>
              <SerialBox>5025000019</SerialBox>
              <RedBadge>فاتورة ضريبية مبسطة</RedBadge>
            </SerialCol>
            <Tile $w={161} $h={80} $ml={7}><TileValue $fs={15} $lh={50}>2025-05-12 11:25:33</TileValue><TileLabel>توقيت إصدار الفاتورة</TileLabel></Tile>
            <Tile $w={161} $h={80} $ml={6} $bg="#107c10" $bd="#0d6a0d" $fg="#fff"><TileValue $fs={17} $bold $lh={50} $rtl>معتمدة</TileValue><TileLabel $c="#fff">الحالة</TileLabel></Tile>
            <GridBox $h={78} $w={326} $ml={7} $mt={1}>
              <GridBody>
                <GridRow $cols={acctCols} $rh={29}>
                  <Head $flag $ft={10} $end $pr={6}>حسم</Head><Head>الحسم</Head><Head>الزبون</Head><Head>الحساب</Head><HCell $num />
                </GridRow>
                <GridRow $cols={acctCols} $rh={30}>
                  <Cell $bg="#f4faf6" /><Cell $bg="#f4faf6" /><Cell $bg="#f4faf6" /><Cell $bg="#f4faf6"><Dots>●●●</Dots>43-الخصم الممنوح</Cell><NumCell>1</NumCell>
                </GridRow>
                <GridRow $cols={acctCols} $rh={30}>
                  <Cell $bg="#98d8a8" /><Cell $bg="#98d8a8" /><Cell $bg="#98d8a8" /><Cell $bg="#98d8a8"><Dots>●●●</Dots>601-ايرادات مخزون</Cell><NumCell>2</NumCell>
                </GridRow>
              </GridBody>
              <Scroll />
            </GridBox>
          </InfoBand>
          <Rule $mt={6} />
          <TotalsRow>
            <Tile $w={469} $h={76} $bg="#0891dc" $bd="#0b7fc0" $fg="#fff" $pad="0 5px 2px 4px"><TileValue $fs={39} $lh={54}>431.25</TileValue><TileLabel $c="#fff">النهائي</TileLabel></Tile>
            <Tile $w={114} $h={76} $ml={6} $bg="#8a8a8a" $bd="#7c7c7c" $fg="#fff" $pad="0 4px 2px 4px"><TileValue $fs={26} $lh={54}>375.00</TileValue><TileLabel $c="#fff">المجموع</TileLabel></Tile>
            <Tile $w={95} $h={76} $ml={410} $pad="0 4px 2px 4px"><TileValue $fs={26} $lh={54}>56.25</TileValue><TileLabel>القيمة المضافة</TileLabel></Tile>
          </TotalsRow>
          <Rule $mt={9} />
          <RightButtons>
            <Button icon="view" text="عرض" menu />
            <Button icon="ops" text="عمليات" menu />
            <Button icon="report" text="تقارير" menu />
            <Button text="شروط الدفع" />
            <Button icon="attach" text="الوثائق" off col="7" />
            <Button text="عمليات الضرائب" menu />
            <Button icon="close" text="إغلاق" />
            <Button text="مزيد..." />
            <Button icon="print" text="طباعة" />
            <Button icon="preview" text="معاينة" />
            <Button icon="trash" text="حذف" off />
            <Button icon="edit" text="تعديل" off />
            <Button icon="fresh" text="جديد" />
            <Button icon="add" text="إضافة" />
          </RightButtons>
        </RightBody>
      </Dialog>
    </Page>
  );
}
